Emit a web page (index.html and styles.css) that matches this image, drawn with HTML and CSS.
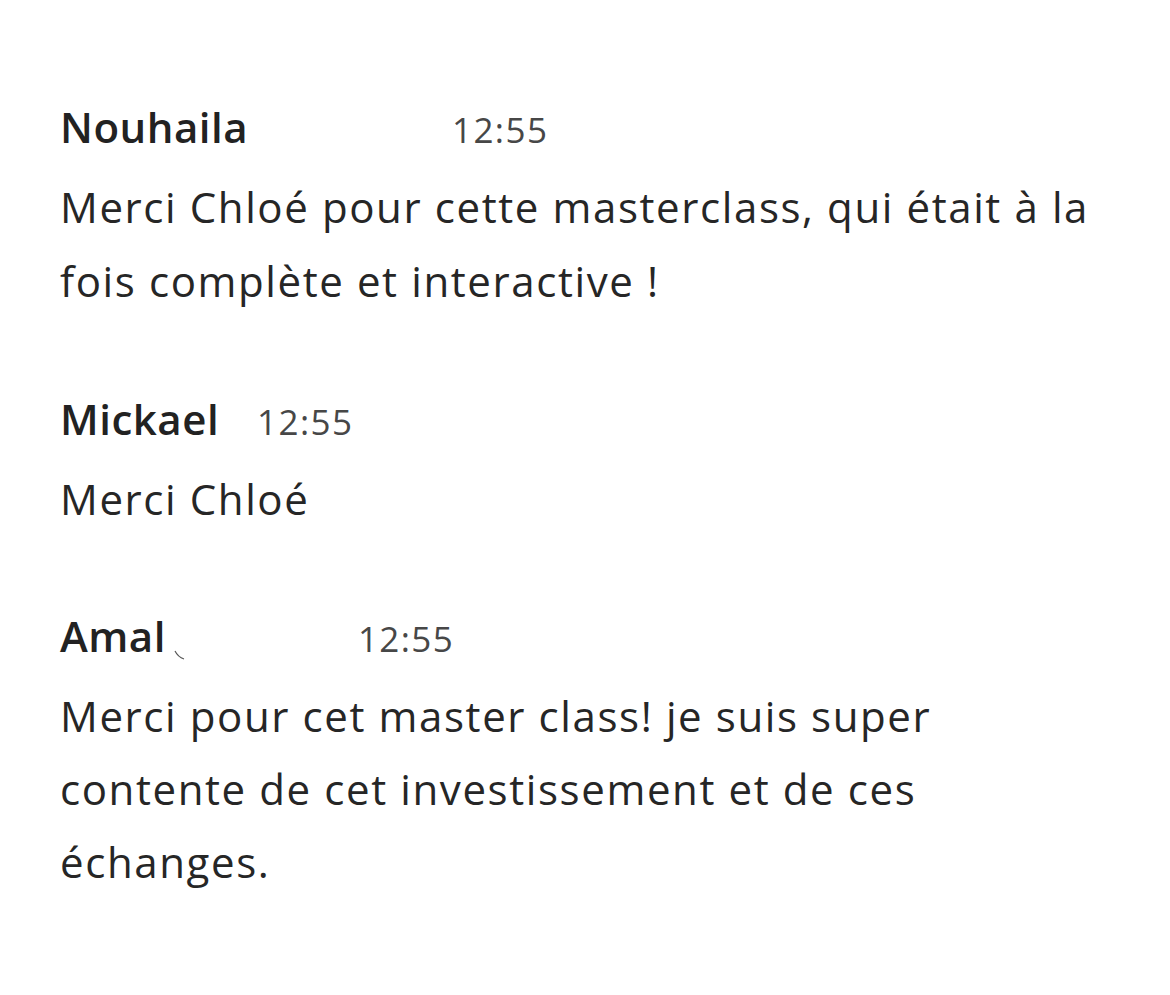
FILE: index.html
```html
<!DOCTYPE html>
<html lang="fr">
<head>
<meta charset="utf-8">
<link rel="stylesheet" href="styles.css">
</head>
<body>
<div class="chat">
  <div class="msg">
    <div class="head"><span class="name">Nouhaila</span><span class="time gap-a">12:55</span></div>
    <div class="text">Merci Chloé pour cette masterclass, qui était à la fois complète et interactive !</div>
  </div>
  <div class="msg">
    <div class="head"><span class="name">Mickael</span><span class="time gap-b">12:55</span></div>
    <div class="text">Merci Chloé</div>
  </div>
  <div class="msg">
    <div class="head"><span class="name">Amal</span><svg class="mark" width="14" height="12" viewBox="0 0 14 12"><path d="M1 1 Q4 7 10 9" fill="none" stroke="#555" stroke-width="1.2"/></svg><span class="time gap-c">12:55</span></div>
    <div class="text narrow">Merci pour cet master class! je suis super contente de cet investissement et de ces échanges.</div>
  </div>
</div>
</body>
</html>
```
FILE: styles.css
```css
html, body { margin: 0; padding: 0; background: #fff; }
body { font-family: "Open Sans", Roboto, sans-serif; }
.chat { padding: 97px 60px 0 60px; width: 1050px; }
.msg { margin-bottom: 71px; }
.msg:nth-child(2) { margin-bottom: 70px; }
.head { display: flex; align-items: baseline; height: 60px; line-height: 60px; margin-bottom: 13px; }
.name { font-size: 42px; font-weight: 600; color: #222; letter-spacing: 0.5px; }
.time { font-size: 35px; color: #474747; letter-spacing: 1.4px; }
.gap-a { margin-left: 204px; }
.gap-b { margin-left: 38px; }
.mark { align-self: flex-end; margin-left: 8px; margin-bottom: 4px; }
.gap-c { margin-left: 170px; }
.text { font-size: 42px; line-height: 74px; color: #262626; letter-spacing: 1.6px; }
.narrow { width: 900px; line-height: 73px; }
```
